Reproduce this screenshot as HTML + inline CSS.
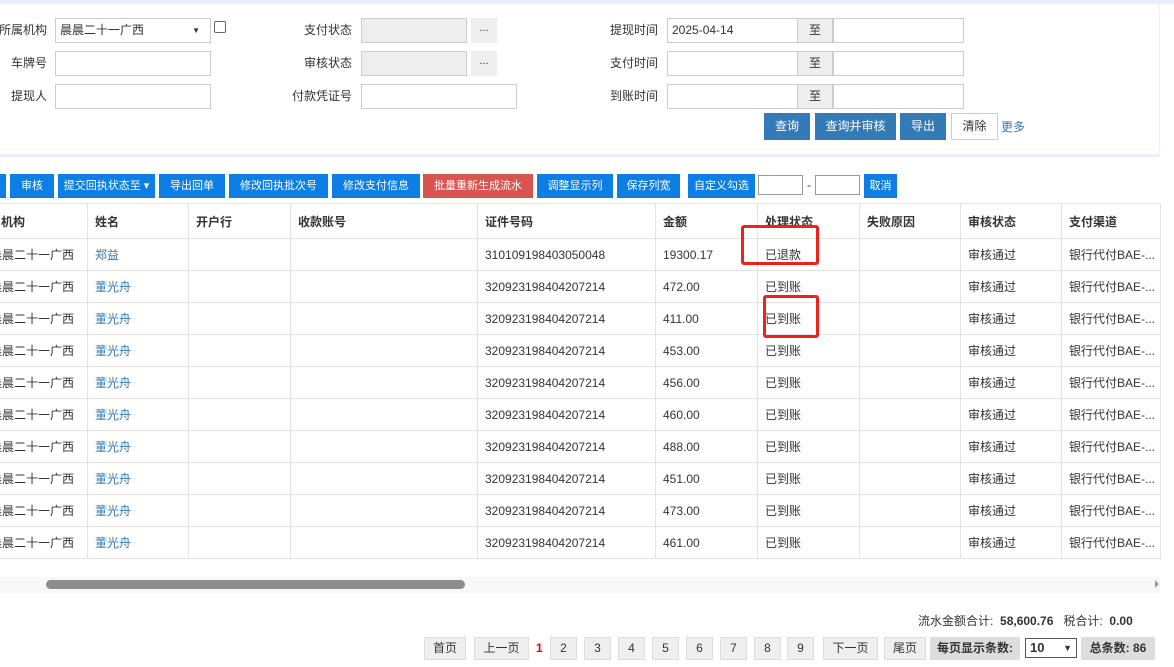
<!DOCTYPE html><html><head><meta charset="utf-8"><style>
*{box-sizing:border-box;margin:0;padding:0}
body{width:1174px;height:667px;overflow:hidden;background:#fff;font-family:"Liberation Sans","Noto Sans CJK SC",sans-serif;font-size:12px;color:#333;position:relative}
.a{position:absolute}
.lb{position:absolute;text-align:right;font-size:12px;line-height:24px}
.in{position:absolute;height:25px;border:1px solid #ccc;background:#fff;font-size:12px;line-height:23px;padding-left:4px}
.g{background:#eee}
.dot{position:absolute;width:26px;height:25px;background:#eee;text-align:center;line-height:20px;font-size:11px}
.zhi{position:absolute;width:36px;height:25px;background:#eee;border:1px solid #ccc;text-align:center;line-height:23px}
.b1{position:absolute;top:113px;height:27px;background:#337ab7;color:#fff;text-align:center;line-height:27px;font-size:12px}
.tb{position:absolute;top:174px;height:24px;background:#0d7ee3;color:#fff;text-align:center;line-height:24px;font-size:11px}
table{position:absolute;left:-10px;top:203px;border-collapse:collapse;table-layout:fixed}
td{border:1px solid #e3e3e3;height:32px;padding-left:7px;white-space:nowrap;overflow:hidden;font-size:12px}
tr td:first-child{padding-left:0;text-indent:-1px}
tr.h td:first-child{text-indent:-14px}
tr.h td{height:35px;font-weight:bold;color:#333}
.lk{color:#337ab7}
.pg{position:absolute;top:637px;height:23px;background:#efefef;border:1px solid #ddd;text-align:center;line-height:21px;font-size:12px}
</style></head><body>
<div class="a" style="left:0;top:0;width:1174px;height:4px;background:#e8f1fb"></div>
<div class="a" style="left:0;top:154px;width:1160px;height:3px;background:#e8f1fb"></div>
<div class="a" style="left:1159px;top:4px;width:1px;height:150px;background:#e8f1fb"></div>

<div class="lb" style="left:-20px;top:18px;width:67px">所属机构</div>
<div class="in" style="left:55px;top:18px;width:156px">晨晨二十一广西<span style="position:absolute;right:10px;font-size:8px">▼</span></div>
<div class="a" style="left:214px;top:21px;width:12px;height:12px;border:1px solid #666;border-radius:2px"></div>
<div class="lb" style="left:0;top:51px;width:47px">车牌号</div>
<div class="in" style="left:55px;top:51px;width:156px"></div>
<div class="lb" style="left:0;top:84px;width:47px">提现人</div>
<div class="in" style="left:55px;top:84px;width:156px"></div>

<div class="lb" style="left:250px;top:18px;width:102px">支付状态</div>
<div class="in g" style="left:361px;top:18px;width:106px"></div><div class="dot" style="left:471px;top:18px">...</div>
<div class="lb" style="left:250px;top:51px;width:102px">审核状态</div>
<div class="in g" style="left:361px;top:51px;width:106px"></div><div class="dot" style="left:471px;top:51px">...</div>
<div class="lb" style="left:250px;top:84px;width:102px">付款凭证号</div>
<div class="in" style="left:361px;top:84px;width:156px"></div>

<div class="lb" style="left:560px;top:18px;width:98px">提现时间</div>
<div class="in" style="left:667px;top:18px;width:131px">2025-04-14</div><div class="zhi" style="left:797px;top:18px">至</div><div class="in" style="left:833px;top:18px;width:131px"></div>
<div class="lb" style="left:560px;top:51px;width:98px">支付时间</div>
<div class="in" style="left:667px;top:51px;width:131px"></div><div class="zhi" style="left:797px;top:51px">至</div><div class="in" style="left:833px;top:51px;width:131px"></div>
<div class="lb" style="left:560px;top:84px;width:98px">到账时间</div>
<div class="in" style="left:667px;top:84px;width:131px"></div><div class="zhi" style="left:797px;top:84px">至</div><div class="in" style="left:833px;top:84px;width:131px"></div>

<div class="b1" style="left:764px;width:46px">查询</div>
<div class="b1" style="left:815px;width:81px">查询并审核</div>
<div class="b1" style="left:900px;width:46px">导出</div>
<div class="b1" style="left:951px;width:47px;background:#fff;color:#333;border:1px solid #ccc;line-height:25px">清除</div>
<div class="a" style="left:1001px;top:118px;color:#337ab7">更多</div>

<div class="tb" style="left:0;width:6px"></div>
<div class="tb" style="left:10px;width:44px">审核</div>
<div class="tb" style="left:58px;width:97px">提交回执状态至 ▾</div>
<div class="tb" style="left:159px;width:66px">导出回单</div>
<div class="tb" style="left:229px;width:99px">修改回执批次号</div>
<div class="tb" style="left:332px;width:88px">修改支付信息</div>
<div class="tb" style="left:423px;width:110px;background:#d9534f">批量重新生成流水</div>
<div class="tb" style="left:537px;width:76px">调整显示列</div>
<div class="tb" style="left:617px;width:63px">保存列宽</div>
<div class="tb" style="left:688px;width:67px">自定义勾选</div>
<div class="a" style="left:758px;top:175px;width:45px;height:20px;border:1px solid #999"></div>
<div class="a" style="left:807px;top:178px">-</div>
<div class="a" style="left:815px;top:175px;width:45px;height:20px;border:1px solid #999"></div>
<div class="tb" style="left:864px;width:33px">取消</div>

<table>
<colgroup><col style="width:97px"><col style="width:101px"><col style="width:102px"><col style="width:187px"><col style="width:178px"><col style="width:102px"><col style="width:102px"><col style="width:101px"><col style="width:101px"><col style="width:99px"></colgroup>
<tr class="h"><td>所属机构</td><td>姓名</td><td>开户行</td><td>收款账号</td><td>证件号码</td><td>金额</td><td>处理状态</td><td>失败原因</td><td>审核状态</td><td>支付渠道</td></tr>
<tr><td>晨晨二十一广西</td><td class="lk">郑益</td><td></td><td></td><td>310109198403050048</td><td>19300.17</td><td>已退款</td><td></td><td>审核通过</td><td>银行代付BAE-...</td></tr>
<tr><td>晨晨二十一广西</td><td class="lk">董光舟</td><td></td><td></td><td>320923198404207214</td><td>472.00</td><td>已到账</td><td></td><td>审核通过</td><td>银行代付BAE-...</td></tr>
<tr><td>晨晨二十一广西</td><td class="lk">董光舟</td><td></td><td></td><td>320923198404207214</td><td>411.00</td><td>已到账</td><td></td><td>审核通过</td><td>银行代付BAE-...</td></tr>
<tr><td>晨晨二十一广西</td><td class="lk">董光舟</td><td></td><td></td><td>320923198404207214</td><td>453.00</td><td>已到账</td><td></td><td>审核通过</td><td>银行代付BAE-...</td></tr>
<tr><td>晨晨二十一广西</td><td class="lk">董光舟</td><td></td><td></td><td>320923198404207214</td><td>456.00</td><td>已到账</td><td></td><td>审核通过</td><td>银行代付BAE-...</td></tr>
<tr><td>晨晨二十一广西</td><td class="lk">董光舟</td><td></td><td></td><td>320923198404207214</td><td>460.00</td><td>已到账</td><td></td><td>审核通过</td><td>银行代付BAE-...</td></tr>
<tr><td>晨晨二十一广西</td><td class="lk">董光舟</td><td></td><td></td><td>320923198404207214</td><td>488.00</td><td>已到账</td><td></td><td>审核通过</td><td>银行代付BAE-...</td></tr>
<tr><td>晨晨二十一广西</td><td class="lk">董光舟</td><td></td><td></td><td>320923198404207214</td><td>451.00</td><td>已到账</td><td></td><td>审核通过</td><td>银行代付BAE-...</td></tr>
<tr><td>晨晨二十一广西</td><td class="lk">董光舟</td><td></td><td></td><td>320923198404207214</td><td>473.00</td><td>已到账</td><td></td><td>审核通过</td><td>银行代付BAE-...</td></tr>
<tr><td>晨晨二十一广西</td><td class="lk">董光舟</td><td></td><td></td><td>320923198404207214</td><td>461.00</td><td>已到账</td><td></td><td>审核通过</td><td>银行代付BAE-...</td></tr>
</table>

<div class="a" style="left:741px;top:225px;width:78px;height:40px;border:3px solid #f0201a;border-radius:3px"></div>
<div class="a" style="left:763px;top:295px;width:56px;height:43px;border:3px solid #f0201a;border-radius:3px"></div>

<div class="a" style="left:0;top:577px;width:1160px;height:16px;background:#f8f8f8"></div>
<div class="a" style="left:46px;top:580px;width:419px;height:9px;background:#8c8c8c;border-radius:5px"></div>
<div class="a" style="left:1155px;top:580px;width:0;height:0;border-left:4px solid #999;border-top:4px solid transparent;border-bottom:4px solid transparent"></div>

<div class="a" style="left:918px;top:612px;font-size:12px">流水金额合计: &nbsp;<b>58,600.76</b> &nbsp;&nbsp;税合计: &nbsp;<b>0.00</b></div>

<div class="pg" style="left:424px;width:42px">首页</div>
<div class="pg" style="left:474px;width:55px">上一页</div>
<div class="a" style="left:536px;top:641px;color:#e00;font-weight:bold">1</div>
<div class="pg" style="left:550px;width:27px">2</div>
<div class="pg" style="left:584px;width:27px">3</div>
<div class="pg" style="left:618px;width:27px">4</div>
<div class="pg" style="left:652px;width:27px">5</div>
<div class="pg" style="left:686px;width:27px">6</div>
<div class="pg" style="left:720px;width:27px">7</div>
<div class="pg" style="left:754px;width:27px">8</div>
<div class="pg" style="left:787px;width:27px">9</div>
<div class="pg" style="left:823px;width:55px">下一页</div>
<div class="pg" style="left:884px;width:42px">尾页</div>
<div class="pg" style="left:930px;width:90px;background:#ddd;border-color:#ddd;font-weight:bold">每页显示条数:</div>
<div class="a" style="left:1025px;top:638px;width:52px;height:20px;border:1px solid #555;font-weight:bold;line-height:18px;padding-left:4px;font-size:13px">10<span style="position:absolute;right:4px;font-size:9px">▼</span></div>
<div class="pg" style="left:1081px;width:74px;background:#ddd;border-color:#ddd;font-weight:bold">总条数: 86</div>
</body></html>
